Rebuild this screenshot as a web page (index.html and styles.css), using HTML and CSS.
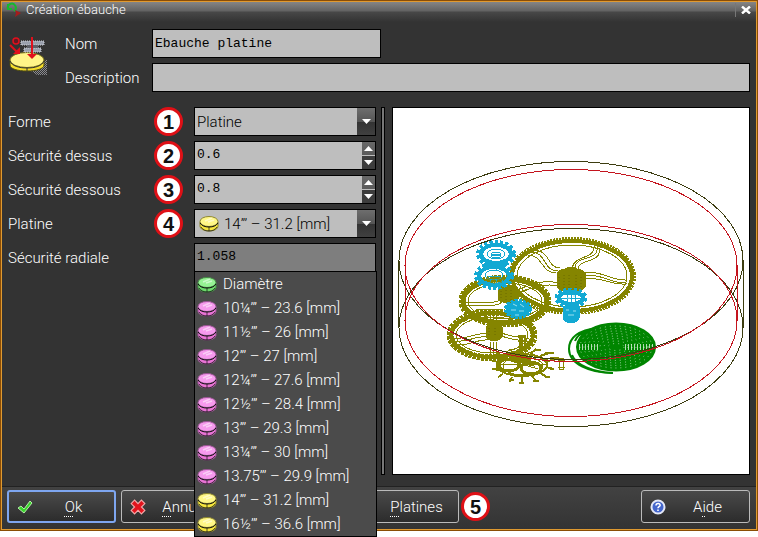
FILE: index.html
```html
<!DOCTYPE html>
<html lang="fr">
<head>
<meta charset="utf-8">
<title>Création ébauche</title>
<link rel="stylesheet" href="styles.css">
</head>
<body>
<svg class="defs" aria-hidden="true">
  <symbol id="disc" viewBox="0 0 20 17">
    <path d="M1 7v4c0 3 4 5 9 5s9-2 9-5V7z" fill="var(--side)" stroke="var(--edge)"/>
    <ellipse cx="10" cy="6.500" rx="9" ry="5" fill="var(--top)" stroke="var(--edge)"/>
    <path d="M1 8c2 3 5 4 9 4s7-1 9-4" fill="none" stroke="#111" stroke-width="1"/>
    <path d="M10 12v4M2 12c2 3 5 4 8 4s6-1 8-4" fill="none" stroke="#111" stroke-width=".7"/>
    <path d="M6 6l7-3M9 7l6-2" stroke="#fff" stroke-opacity=".5" stroke-width="1.500"/>
  </symbol>
</svg>
<main class="window">
  <header class="titlebar">
    <svg class="app-icon" viewBox="0 0 16 16" aria-hidden="true"><path d="M2 7a4 4 0 1 1 6 2M2 2v5h4" fill="none" stroke="#16b92c" stroke-width="2"/><path d="M9 8l6 3-6 4 1-4z" fill="#a61c1c"/></svg>
    <h1>Création ébauche</h1>
    <button class="close" type="button" aria-label="Fermer"><svg viewBox="0 0 10 8" aria-hidden="true"><path d="M1 .5l8 7M9 .5l-8 7" stroke="#fff" stroke-width="2.400"/></svg></button>
  </header>

  <form>
    <section class="identity">
      <svg class="tool-icon" viewBox="0 0 40 40" aria-hidden="true">
        <defs><pattern id="dither" width="2" height="2" patternUnits="userSpaceOnUse"><path d="M0 0h1v1H0zM1 1h1v1H1z" fill="#8b8b90"/></pattern></defs>
        <path d="M22 34l16-12v16H28z" fill="url(#dither)"/>
        <path d="M1 23v5c0 4 8 6 17 6s17-2 17-6v-5z" fill="#f4dc2c" stroke="#4d4a10"/>
        <ellipse cx="18" cy="23" rx="17" ry="7.500" fill="#fff488" stroke="#77701c"/>
        <path d="M1 24c2 5 9 7 17 7s15-2 17-7M18 31v3" fill="none" stroke="#333"/>
        <path d="M12 4h23v4H12zM15 11h17v4H15z" fill="#9aa0ad" stroke="#d2d5dc" stroke-dasharray="1 1"/>
        <path d="M18 8h11v3H18z" fill="#5d6068"/>
        <path d="M23 0v18" stroke="#e0101c" stroke-width="2"/><path d="M18 17h10l-5 5z" fill="#e0101c"/>
        <circle cx="7" cy="4" r="3" fill="#641a24" stroke="#e0101c" stroke-width="1.500"/>
        <path d="M1 8l7 7" stroke="#e0101c" stroke-width="2"/><path d="M11 10v7H4z" fill="#e0101c"/>
      </svg>
      <label for="nom">Nom</label>
      <input id="nom" class="field name" type="text" value="Ebauche platine">
      <label for="description">Description</label>
      <input id="description" class="field" type="text">
    </section>

    <section class="content">
      <div class="params">
        <label for="forme">Forme</label>
        <span class="badge">1</span>
        <div class="control combo">
          <select id="forme"><option>Platine</option></select>
          <span class="drop"><svg viewBox="0 0 9 5" aria-hidden="true"><path d="M0 0h9L4.500 5z" fill="#fff"/></svg></span>
        </div>

        <label for="dessus">Sécurité dessus</label>
        <span class="badge">2</span>
        <div class="control">
          <input id="dessus" type="text" inputmode="decimal" value="0.6">
          <span class="spin">
            <button type="button" aria-label="Augmenter"><svg viewBox="0 0 9 5" aria-hidden="true"><path d="M0 5h9L4.500 0z" fill="#fff"/></svg></button>
            <button type="button" aria-label="Diminuer"><svg viewBox="0 0 9 5" aria-hidden="true"><path d="M0 0h9L4.500 5z" fill="#fff"/></svg></button>
          </span>
        </div>

        <label for="dessous">Sécurité dessous</label>
        <span class="badge">3</span>
        <div class="control">
          <input id="dessous" type="text" inputmode="decimal" value="0.8">
          <span class="spin">
            <button type="button" aria-label="Augmenter"><svg viewBox="0 0 9 5" aria-hidden="true"><path d="M0 5h9L4.500 0z" fill="#fff"/></svg></button>
            <button type="button" aria-label="Diminuer"><svg viewBox="0 0 9 5" aria-hidden="true"><path d="M0 0h9L4.500 5z" fill="#fff"/></svg></button>
          </span>
        </div>

        <label for="platine">Platine</label>
        <span class="badge">4</span>
        <div class="control combo">
          <svg class="disc yellow" aria-hidden="true"><use href="#disc"/></svg>
          <select id="platine"><option>14’’’ – 31.2 [mm]</option></select>
          <span class="drop"><svg viewBox="0 0 9 5" aria-hidden="true"><path d="M0 0h9L4.500 5z" fill="#fff"/></svg></span>
        </div>

        <label for="radiale">Sécurité radiale</label>
        <div class="control readonly">
          <input id="radiale" type="text" value="1.058" readonly>
          <ul class="menu" role="listbox" aria-label="Platine">
            <li role="option"><svg class="disc green" aria-hidden="true"><use href="#disc"/></svg>Diamètre</li>
            <li role="option"><svg class="disc pink" aria-hidden="true"><use href="#disc"/></svg>10¼’’’ – 23.6 [mm]</li>
            <li role="option"><svg class="disc pink" aria-hidden="true"><use href="#disc"/></svg>11½’’’ – 26 [mm]</li>
            <li role="option"><svg class="disc pink" aria-hidden="true"><use href="#disc"/></svg>12’’’ – 27 [mm]</li>
            <li role="option"><svg class="disc pink" aria-hidden="true"><use href="#disc"/></svg>12¼’’’ – 27.6 [mm]</li>
            <li role="option"><svg class="disc pink" aria-hidden="true"><use href="#disc"/></svg>12½’’’ – 28.4 [mm]</li>
            <li role="option"><svg class="disc pink" aria-hidden="true"><use href="#disc"/></svg>13’’’ – 29.3 [mm]</li>
            <li role="option"><svg class="disc pink" aria-hidden="true"><use href="#disc"/></svg>13¼’’’ – 30 [mm]</li>
            <li role="option"><svg class="disc pink" aria-hidden="true"><use href="#disc"/></svg>13.75’’’ – 29.9 [mm]</li>
            <li role="option"><svg class="disc yellow" aria-hidden="true"><use href="#disc"/></svg>14’’’ – 31.2 [mm]</li>
            <li role="option"><svg class="disc yellow" aria-hidden="true"><use href="#disc"/></svg>16½’’’ – 36.6 [mm]</li>
          </ul>
        </div>
      </div>

      <div class="splitter"></div>

      <div class="preview">
        <svg viewBox="394 109 354 364" role="img" aria-label="Aperçu" fill="none">
          <!-- going train wheels -->
          <g stroke="#858500" shape-rendering="crispEdges">
            <ellipse cx="572" cy="276" rx="61" ry="36" stroke-width="6" stroke-dasharray="2 1"/>
            <ellipse cx="572" cy="276" rx="60" ry="35" stroke-width="4"/>
            <ellipse cx="572" cy="276" rx="55" ry="31"/>
            <path d="M530 252c18 0 12 19 28 19M532 250c20 0 14 18 28 18M528 255c16 1 12 17 28 18M597 246c3 16-21 8-22 22M600 247c1 18-20 10-22 22M594 246c1 14-19 8-22 22M585 273c16-3 26 8 42 7M585 276c16-3 26 8 42 7M585 279c14-3 26 6 40 5M557 283c-10-4-25 1-42 8M557 286c-10-3-22 0-38 7"/>
            <ellipse cx="505" cy="301" rx="43" ry="23" stroke-width="7" stroke-dasharray="3 1"/>
            <ellipse cx="505" cy="301" rx="42" ry="22" stroke-width="5"/>
            <ellipse cx="505" cy="301" rx="37" ry="18"/>
            <path d="M466 302h28c6 0 8-6 16-6M466 305h29c6 0 8-6 16-6M476 309h24M515 291c10-5 20-8 26-4M515 294c12-5 20-8 26-4M500 288l-8-8M503 286l-8-8M524 297l18 12M521 299l18 13M509 304v18M512 304v18"/>
            <ellipse cx="492" cy="335" rx="42" ry="23" stroke-width="7" stroke-dasharray="3 1"/>
            <ellipse cx="492" cy="335" rx="41" ry="22" stroke-width="4"/>
            <ellipse cx="492" cy="335" rx="36" ry="18"/>
            <path d="M454 338c16 2 18-6 33-4M454 341c18 2 18-6 33-4M458 345c16 0 18-6 30-5M502 333c10 5 20 3 30 7M502 336c10 5 20 3 28 7M490 312v16M493 312v16M496 312v16M490 342v17M493 342v17M496 342v17M500 328l12-12"/>
          </g>
          <g fill="#858500" stroke="#858500" shape-rendering="crispEdges">
            <path d="M557 273c4-6 24-6 28 0v14c-4 6-24 6-28 0z"/>
            <path d="M567 272v-5h7v5zM498 290c4-6 16-7 20-1v10c-4 5-16 5-20 0z"/>
            <path d="M508 288l12 8-6 8-12-4z"/>
            <path d="M486 327c3-5 13-5 16 0v10c-3 5-13 5-16 0z"/>
          </g>
          <path d="M559 277v10M564 275v13M569 275v13M576 275v13M581 277v10M501 291v8M506 290v10M511 290v10M489 328v8M495 328v9" stroke="#6a6a00" stroke-dasharray="1 2"/>
          <!-- escape wheel and pallets -->
          <g stroke="#858500" shape-rendering="crispEdges">
            <ellipse cx="522" cy="365" rx="25" ry="11" stroke-width="2"/>
            <ellipse cx="523" cy="366" rx="20" ry="9"/>
            <ellipse cx="509" cy="365" rx="10" ry="6" stroke-width="3"/>
            <ellipse cx="531" cy="368" rx="10" ry="6" stroke-width="3"/>
            <path d="M500 370l-8-1M503 374l-5 3M512 377l-2 5M522 377v6M532 376l4 5M540 373l7 4M546 367l8 2M546 361l9-1M540 356l9-3M530 354l6-5M522 353v-18M514 354l-4-5M505 357l-8-4M500 362l-8-1M518 336h8M518 341h8M520 336v16M525 336v16M535 350h6M545 353h9M550 358h9M492 369h5M550 369h4M509 380h5M519 383h5M533 381h6M545 377h5" stroke-width="2"/>
            <path d="M559 358h4v11h-4zM558 360h7M558 367h7M528 352l22 9M496 364h52M504 359l34 10"/>
            <path d="M514 352l14 4 6 10-10-2-12-6z" fill="#858500"/>
          </g>
          <!-- pinions -->
          <g stroke="#12a9d3" shape-rendering="crispEdges">
            <ellipse cx="496" cy="254" rx="17" ry="11" stroke-width="6" stroke-dasharray="3 2"/>
            <ellipse cx="496" cy="254" rx="15" ry="9" stroke-width="4"/>
            <ellipse cx="496" cy="254" rx="9" ry="5"/><ellipse cx="496" cy="255" rx="5" ry="3"/>
            <path d="M491 255h10M484 264h24M488 266h16" stroke-width="2"/>
            <ellipse cx="494" cy="276" rx="17" ry="11" stroke-width="6" stroke-dasharray="3 2"/>
            <ellipse cx="494" cy="276" rx="15" ry="9" stroke-width="4"/>
            <ellipse cx="494" cy="275" rx="9" ry="5"/>
            <path d="M490 262v6M496 262v8M502 262v6M488 276h12M490 279v8M496 280v8M502 279v8"/>
            <ellipse cx="571" cy="298" rx="14" ry="8" stroke-width="5" stroke-dasharray="3 2"/>
            <ellipse cx="571" cy="298" rx="12" ry="6" stroke-width="4"/>
            <path d="M561 298h20M563 294h16M563 302h16M567 291v14M571 291v14M575 291v14"/>
            <path d="M563 306h16v12c-2 6-14 6-16 0z" fill="#12a9d3"/>
            <ellipse cx="518" cy="309" rx="12" ry="8" fill="#12a9d3" stroke-width="4" stroke-dasharray="3 1"/>
          </g>
          <path d="M513 304l4 2M520 304l4 3M511 310h5M519 311h5M515 315h4M566 310h3M573 311h3M568 315h6M567 298h3M573 296h2" stroke="#9adff0"/>
          <path d="M487 279h18M490 282h12M494 276v8" stroke="#858500" stroke-dasharray="3 2"/>
          <!-- mainspring -->
          <g stroke="#008500">
            <ellipse cx="616" cy="347" rx="39" ry="23.500" fill="#008500" stroke-width="2"/>
            <g stroke="#fff" stroke-opacity=".75" stroke-width=".8" stroke-dasharray="1 4">
              <ellipse cx="616" cy="347" rx="36" ry="21"/><ellipse cx="616" cy="347" rx="32" ry="18.500"/><ellipse cx="616" cy="347" rx="28" ry="16"/><ellipse cx="616" cy="347" rx="24" ry="13.500"/><ellipse cx="616" cy="347" rx="20" ry="11"/><ellipse cx="616" cy="347" rx="16" ry="8.500"/><ellipse cx="616" cy="347" rx="12" ry="6"/><ellipse cx="616" cy="347" rx="8" ry="3.500"/>
            </g>
            <path d="M579 347h19M625 347h28" stroke="#fff" stroke-opacity=".7" stroke-width="6" stroke-dasharray="1 2"/>
            <path d="M598 328c-18 2-29 9-29 21 0 15 21 24 44 24M590 331c-10 2-14 7-15 10" stroke-width="2"/>
            <path d="M572 355c4 10 21 17 41 18" stroke-width="2"/>
          </g>
          <!-- blank outline -->
          <g shape-rendering="crispEdges">
            <g stroke="#3c3c10"><ellipse cx="571" cy="260.500" rx="172" ry="99"/><ellipse cx="571" cy="327.500" rx="172" ry="99"/><path d="M398.500 260v68M743 260v68"/></g>
            <g stroke="#c4141e"><ellipse cx="571" cy="265.500" rx="166" ry="96"/><ellipse cx="571" cy="320.500" rx="166" ry="96"/><path d="M405 265v56M737 265v56"/></g>
          </g>
        </svg>
      </div>
    </section>

    <footer class="actions">
      <button class="action primary" type="submit"><svg viewBox="0 0 16 14" aria-hidden="true"><path d="M1 8l3-2 3 3 6-8 2 2-8 10z" fill="#39d52b" stroke="#b5eba9"/></svg><span><u>O</u>k</span></button>
      <button class="action" type="button"><svg viewBox="0 0 14 14" aria-hidden="true"><path d="M1 4l3-3 3 3 3-3 3 3-3 3 3 3-3 3-3-3-3 3-3-3 3-3z" fill="#e3131d" stroke="#f3a9a9"/></svg><span><u>A</u>nnuler</span></button>
      <button class="action plates" type="button"><svg class="disc yellow" aria-hidden="true"><use href="#disc"/></svg><span><u>P</u>latines</span></button>
      <span class="badge">5</span>
      <button class="action help" type="button"><svg viewBox="0 0 16 16" aria-hidden="true"><circle cx="8" cy="8" r="6.500" fill="#4466cc" stroke="#e4e8f6" stroke-width="2"/><path d="M6 6.500c0-3 4.500-2.500 4 0-.3 1.200-2 1.200-2 2.700M8 10.500v1.500" fill="none" stroke="#fff" stroke-width="1.600"/></svg><span>A<u>i</u>de</span></button>
    </footer>
  </form>
</main>
</body>
</html>
```
FILE: styles.css
```css
* { box-sizing: border-box; }

body {
  margin: 0;
  min-height: 100vh;
  background: #fff;
  color: #fff;
  font: 15px/20px Roboto, "Liberation Sans", sans-serif;
  font-weight: 300;
}

button, input, select { font: inherit; color: inherit; margin: 0; }

.defs { position: absolute; width: 0; height: 0; }

.window {
  border: 1px solid #8a4d05;
  outline: 1px solid #e09a30;
  outline-offset: -2px;
  background: #333;
}

.titlebar {
  display: flex;
  align-items: center;
  gap: 4px;
  height: 20px;
  margin: 1px;
  padding: 0 5px 4px 4px;
  background: linear-gradient(#858585, #626262 9px, #484848 10px, #333);
}
.titlebar h1 { flex: 1; margin: 0; font-size: 13px; line-height: 16px; font-weight: 300; }
.app-icon { width: 16px; height: 16px; }
.close {
  display: flex;
  align-items: center;
  height: 14px;
  padding: 0 0 0 5px;
  border: 0;
  border-left: 1px solid #777;
  background: none;
}
.close svg { width: 10px; height: 8px; }

.identity {
  display: grid;
  grid-template-columns: 40px 71px 1fr;
  column-gap: 16px;
  row-gap: 5px;
  align-items: center;
  padding: 6px 7px 15px 8px;
}
.tool-icon { grid-row: 1 / 3; width: 40px; height: 40px; align-self: start; margin-top: 8px; }

.field {
  width: 100%;
  height: 29px;
  padding: 0 2px;
  border: 1px solid #000;
  background: #bebebe;
  color: #000;
  font: 13px/20px "Liberation Mono", monospace;
}
.name { max-width: 229px; }

.content {
  display: grid;
  grid-template-columns: 368px 4px minmax(0, 1fr);
  padding: 0 7px 11px 7px;
}
.splitter { margin-left: 5px; width: 4px; border: 1px solid #000; background: #777; }
.preview { margin-left: 12px; padding: 1px; border: 1px solid #000; background: #fff; }
.preview svg { display: block; width: 100%; }

.params {
  display: grid;
  grid-template-columns: 146px 29px 182px;
  grid-auto-rows: 29px;
  row-gap: 5px;
  align-content: start;
  align-items: center;
}

.badge {
  display: flex;
  align-items: center;
  justify-content: center;
  width: 29px;
  height: 29px;
  border: 3px solid #df1016;
  border-radius: 50%;
  background: #fff;
  color: #111;
  font: bold 20px/20px "Liberation Sans", sans-serif;
}

.control {
  position: relative;
  grid-column: 3;
  display: flex;
  align-items: stretch;
  height: 29px;
  margin-left: 11px;
  width: 182px;
  border: 1px solid #000;
  background: #bebebe;
  color: #000;
}
.control input {
  flex: 1;
  min-width: 0;
  padding: 0 2px 2px;
  border: 0;
  background: none;
  font: 13px/20px "Liberation Mono", monospace;
}
.control select {
  flex: 1;
  min-width: 0;
  padding: 0 2px;
  border: 0;
  appearance: none;
  background: none;
}
.control > .disc { align-self: center; margin-left: 4px; margin-right: 3px; }
.readonly { background: #7e7e7e; }

.drop {
  display: flex;
  align-items: center;
  justify-content: center;
  width: 18px;
  background: linear-gradient(#6e6e6e, #555 50%, #333 51%, #404040);
}
.drop svg, .spin svg { width: 9px; height: 5px; }
.spin { display: flex; flex-direction: column; width: 13px; gap: 1px; }
.spin button {
  flex: 1;
  display: flex;
  align-items: center;
  justify-content: center;
  padding: 0;
  border: 0;
  background: linear-gradient(#686868, #5a5a5a);
}
.spin button + button { background: #3d3d3d; }

.disc { flex: none; width: 20px; height: 17px; }
.yellow { --top: #fff787; --side: #f5e53c; --edge: #8d8630; }
.pink { --top: #f69aed; --side: #e873d4; --edge: #9a5594; }
.green { --top: #96f294; --side: #6cd96b; --edge: #448a44; }

.menu {
  position: absolute;
  z-index: 2;
  top: 27px;
  left: -1px;
  width: 183px;
  margin: 0;
  padding: 0;
  list-style: none;
  border: 1px solid #000;
  background: #4b4b4b;
  color: #fff;
}
.menu li { display: flex; align-items: center; gap: 6px; height: 24px; padding-left: 2px; white-space: nowrap; }

.actions {
  display: flex;
  align-items: center;
  gap: 5px;
  padding: 3px 7px 7px 6px;
  border-top: 1px solid #222;
  background: linear-gradient(#424242, #333);
}
.action {
  display: flex;
  align-items: center;
  width: 109px;
  height: 33px;
  padding: 0 8px;
  border: 1px solid #bbb;
  border-radius: 3px;
  background: linear-gradient(#4a4a4a, #2c2c2c);
}
.action svg { flex: none; width: 16px; height: 16px; }
.action span { flex: 1; padding-left: 8px; text-align: center; }
.action u { text-decoration: underline dotted 1px; text-underline-offset: 4px; }
.primary { border: 2px solid #7ea6f0; }
.plates { margin-left: 115px; }
.plates + .badge { margin-left: -3px; }
.help { margin-left: auto; }
```
